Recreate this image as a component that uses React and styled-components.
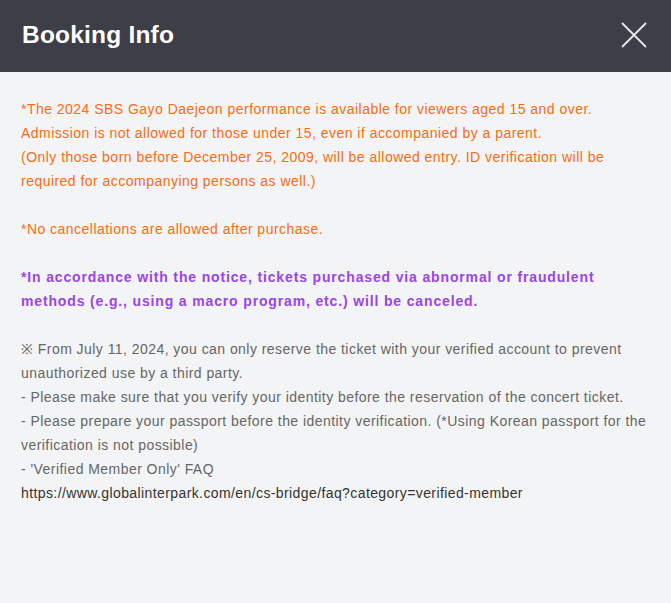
import styled, { createGlobalStyle } from "styled-components";

const GlobalStyle = createGlobalStyle`
    html, body {
        margin: 0;
        padding: 0;
        background: #f3f4f6;
    }
`;

const Modal = styled.section`
    width: 671px;
    min-height: 603px;
    background: #f3f4f6;
    font-family: "Liberation Sans", Arial, sans-serif;
`;

const Header = styled.header`
    display: flex;
    justify-content: space-between;
    align-items: center;
    height: 72px;
    padding: 0 24px 3px 22px;
    box-sizing: border-box;
    background: #3d3e48;
`;

const Title = styled.h1`
    margin: 0;
    font-size: 24.5px;
    font-weight: bold;
    letter-spacing: 0.2px;
    color: #fff;
`;

const CloseButton = styled.button`
    display: flex;
    padding: 0;
    border: 0;
    background: none;
    cursor: pointer;
`;

const Body = styled.div`
    padding: 25px 21px 40px;
`;

const Para = styled.p`
    margin: 0 0 24px;
    font-size: 14px;
    line-height: 24px;
    letter-spacing: ${({ $spacing }) => $spacing || "0.5px"};
    font-weight: ${({ $bold }) => ($bold ? "bold" : "normal")};
    color: ${({ $tone }) =>
        $tone === "orange" ? "#ff6a10" : $tone === "purple" ? "#9a45e8" : "#666"};
    white-space: nowrap;
`;

const Link = styled.span`
    color: #333;
    letter-spacing: 0.4px;
`;

function CloseIcon() {
    return (
        <svg width="26" height="26" viewBox="0 0 26 26">
            <path d="M1 1 L25 25 M25 1 L1 25" stroke="#e8e8e8" strokeWidth="1.8" fill="none" />
        </svg>
    );
}

export default function App() {
    return (
        <>
            <GlobalStyle />
            <Modal>
                <Header>
                    <Title>Booking Info</Title>
                    <CloseButton aria-label="close">
                        <CloseIcon />
                    </CloseButton>
                </Header>
                <Body>
                    <Para $tone="orange" $spacing="0.47px">
                        *The 2024 SBS Gayo Daejeon performance is available for viewers aged 15 and over.
                        <br />
                        Admission is not allowed for those under 15, even if accompanied by a parent.
                        <br />
                        (Only those born before December 25, 2009, will be allowed entry. ID verification will be
                        <br />
                        required for accompanying persons as well.)
                    </Para>
                    <Para $tone="orange" $spacing="0.47px">*No cancellations are allowed after purchase.</Para>
                    <Para $tone="purple" $bold $spacing="0.85px">
                        *In accordance with the notice, tickets purchased via abnormal or fraudulent
                        <br />
                        methods (e.g., using a macro program, etc.) will be canceled.
                    </Para>
                    <Para $spacing="0.45px">
                        ※ From July 11, 2024, you can only reserve the ticket with your verified account to prevent
                        <br />
                        unauthorized use by a third party.
                        <br />
                        - Please make sure that you verify your identity before the reservation of the concert ticket.
                        <br />
                        - Please prepare your passport before the identity verification. (*Using Korean passport for the
                        <br />
                        verification is not possible)
                        <br />
                        - 'Verified Member Only' FAQ
                        <br />
                        <Link>https://www.globalinterpark.com/en/cs-bridge/faq?category=verified-member</Link>
                    </Para>
                </Body>
            </Modal>
        </>
    );
}
